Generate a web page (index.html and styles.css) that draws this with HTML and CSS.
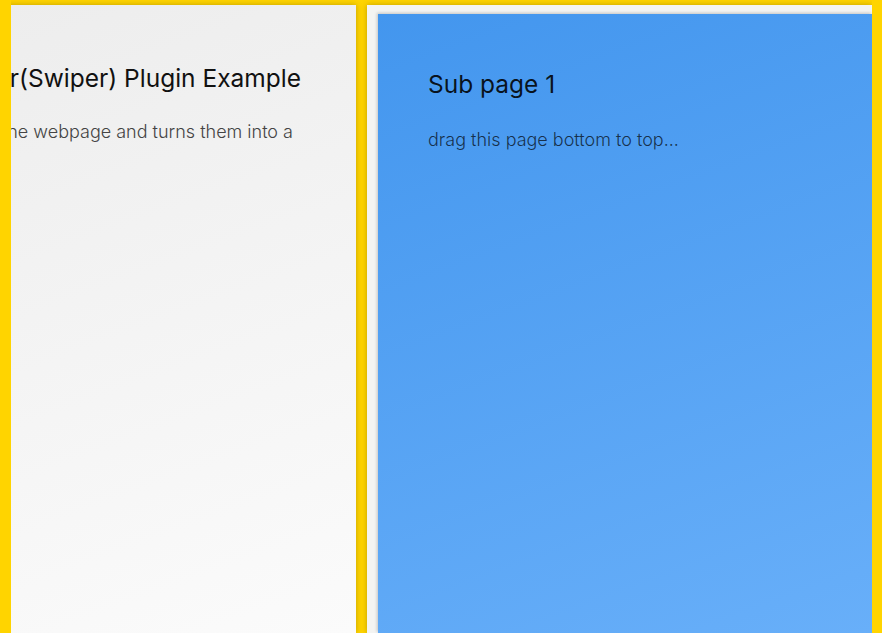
FILE: index.html
```html
<!DOCTYPE html>
<html lang="en">
<head>
  <meta charset="UTF-8" />
  <title>Page Slider (Swiper) Plugin Example</title>
  <link rel="stylesheet" href="styles.css">
</head>
<body>
  <div class="swiper">
    <div class="swiper-wrapper">
      <div class="slide slide-intro">
        <h1>Slider(Swiper) Plugin Example</h1>
        <p>Takes the webpage and turns them into a slider.</p>
      </div>
      <div class="slide slide-sub">
        <div class="sub-page">
          <h2>Sub page 1</h2>
          <p>drag this page bottom to top...</p>
        </div>
      </div>
    </div>
  </div>
</body>
</html>
```

FILE: styles.css
```css
html, body { height: 100%; }
body { margin: 0; background: #ffd400; font-family: Inter, "Noto Sans", sans-serif; overflow: hidden; }
.swiper { height: 100%; margin: 0 10px 0 11px; padding-top: 5px; box-sizing: border-box; overflow: hidden; }
.swiper-wrapper { display: flex; gap: 11px; height: 100%; transform: translateX(-160px); }
.slide { flex: 0 0 505px; box-sizing: border-box; box-shadow: 0 0 6px rgba(0,0,0,0.25); }
.slide-intro { padding: 58px 10px 0 102px; background: linear-gradient(160deg, #ececec, #fbfbfb); }
.slide-intro h1 { margin: 0; font-size: 24.5px; font-weight: 400; color: #111; }
.slide-intro p { margin: 28px 0 0; max-width: 350px; text-indent: -5px; font-size: 18px; font-weight: 300; color: #444; }
.slide-sub { padding: 9px 0 0 11px; background: #f4f4f2; }
.sub-page { height: 100%; padding: 55px 50px 0; box-sizing: border-box; background: linear-gradient(160deg, #4396ee, #68aff9); box-shadow: -1px -1px 3px rgba(0,0,0,0.2); }
.sub-page h2 { margin: 0; font-size: 24.5px; font-weight: 400; color: rgba(0,0,0,0.88); }
.sub-page p { margin: 30px 0 0; font-size: 18px; font-weight: 300; color: rgba(0,0,0,0.7); }
```
